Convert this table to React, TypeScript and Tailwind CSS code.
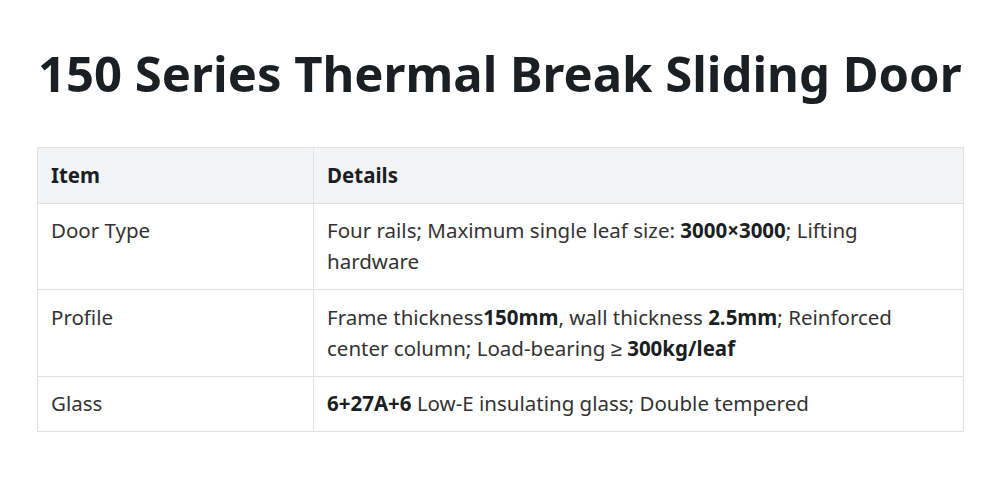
export default function App() {
  const rows = [
    {
      item: "Door Type",
      details: (
        <>
          Four rails; Maximum single leaf size: <strong>3000×3000</strong>; Lifting hardware
        </>
      ),
    },
    {
      item: "Profile",
      details: (
        <>
          Frame thickness<strong>150mm</strong>, wall thickness <strong>2.5mm</strong>; Reinforced center column;
          Load-bearing ≥ <strong>300kg/leaf</strong>
        </>
      ),
    },
    {
      item: "Glass",
      details: (
        <>
          <strong>6+27A+6</strong> Low-E insulating glass; Double tempered
        </>
      ),
    },
  ];

  return (
    <div className="w-[1000px] h-[487px] bg-white px-[37px] pt-[44px] font-['Noto_Sans',sans-serif] text-[#333]">
      <h1 className="text-[49px] leading-[58px] font-bold text-[#1b1f24] pl-[1px]">
        150 Series Thermal Break Sliding Door
      </h1>
      <table className="mt-[45px] w-[927px] border-collapse text-[20.5px] leading-[31px]">
        <thead>
          <tr className="bg-[#f3f4f6]">
            <th className="w-[276px] border border-[#dfe1e4] px-[13px] pt-[11.5px] pb-[12px] text-left font-bold text-[#1b1f24]">
              Item
            </th>
            <th className="border border-[#dfe1e4] px-[13px] pt-[11.5px] pb-[12px] text-left font-bold text-[#1b1f24]">
              Details
            </th>
          </tr>
        </thead>
        <tbody>
          {rows.map((row, i) => (
            <tr key={i}>
              <td className="align-top border border-[#dfe1e4] px-[13px] pt-[11.5px] pb-[12px]">{row.item}</td>
              <td className="align-top border border-[#dfe1e4] px-[13px] pt-[11.5px] pb-[12px] [&_strong]:font-bold [&_strong]:text-[#1b1f24]">
                {row.details}
              </td>
            </tr>
          ))}
        </tbody>
      </table>
    </div>
  );
}
